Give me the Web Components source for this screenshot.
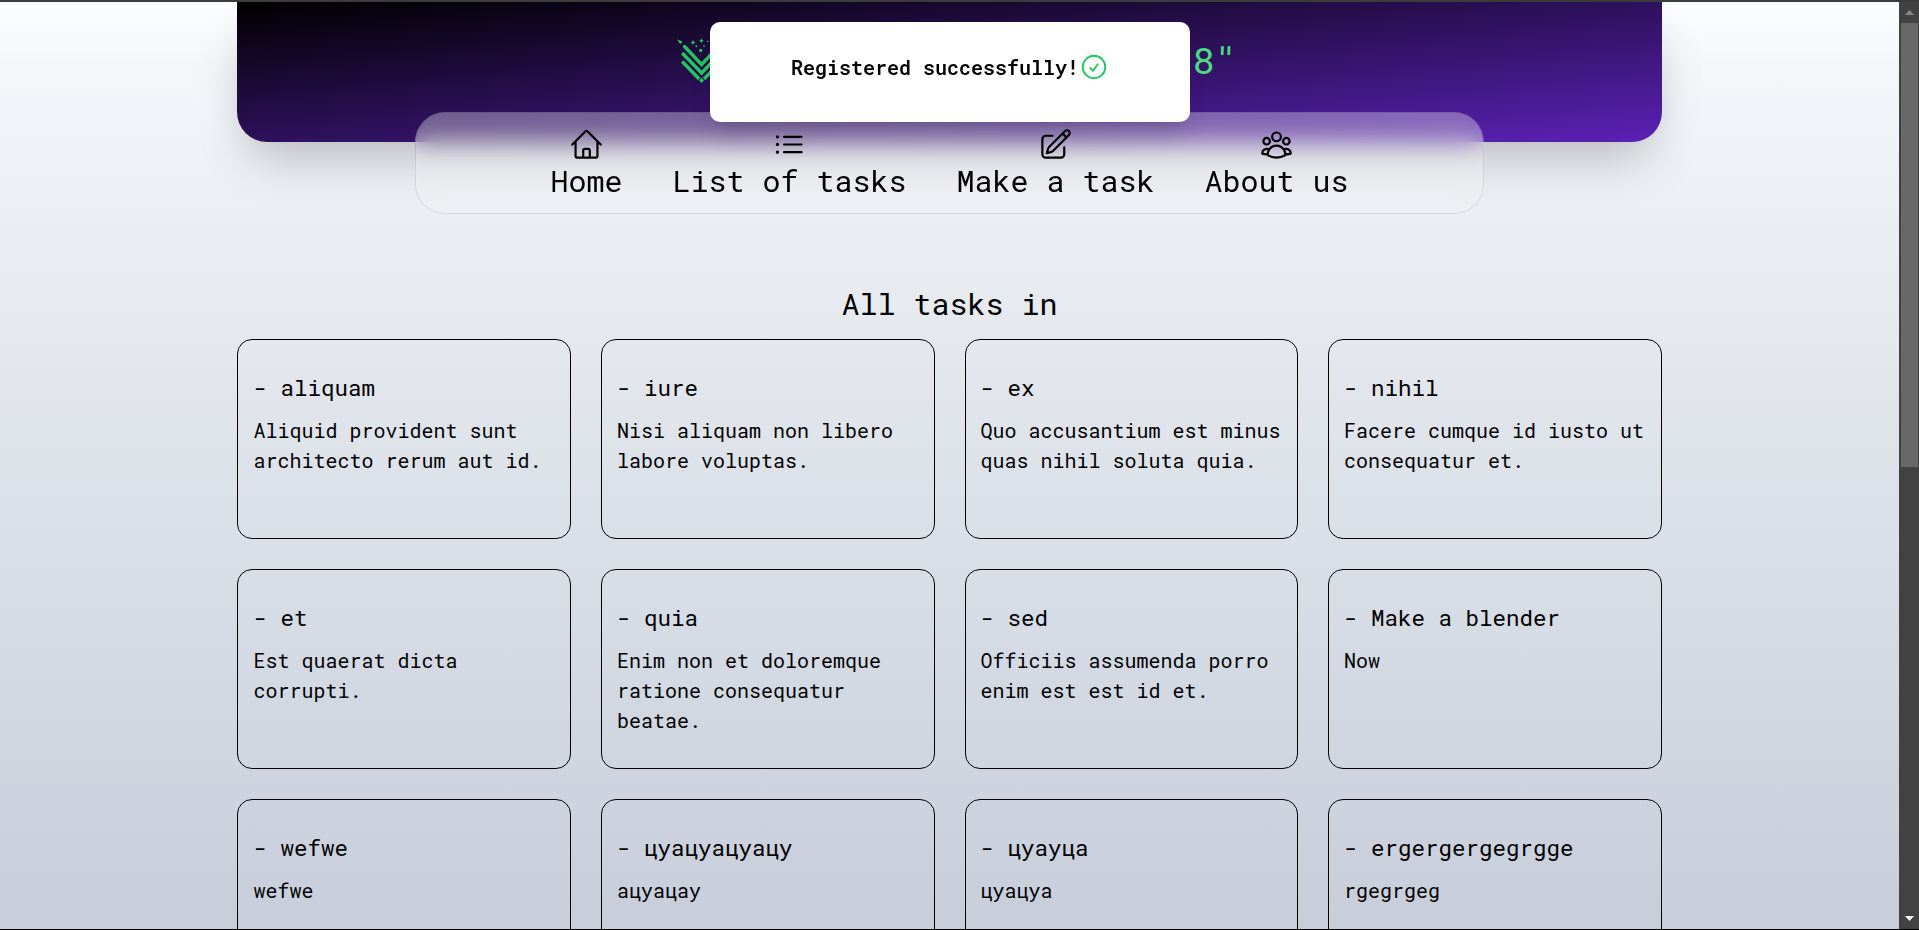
<!DOCTYPE html>
<html lang="en">
<head>
<meta charset="utf-8">
<title>Tasks</title>
<style>
html,body{margin:0;height:100%;overflow:hidden}
body{font-family:"Roboto Mono","Liberation Mono",monospace;color:#000}
</style>
</head>
<body>
<task-app></task-app>
<script>
const define=(name,html)=>customElements.define(name,class extends HTMLElement{
  constructor(){super();this.attachShadow({mode:'open'}).innerHTML=html;}
});

const icons={
  home:'M2.25 12l8.954-8.955c.44-.439 1.152-.439 1.591 0L21.75 12M4.5 9.75v10.125c0 .621.504 1.125 1.125 1.125H9.75v-4.875c0-.621.504-1.125 1.125-1.125h2.25c.621 0 1.125.504 1.125 1.125V21h4.125c.621 0 1.125-.504 1.125-1.125V9.75M8.25 21h8.25',
  list:'M8.25 6.75h12M8.25 12h12m-12 5.25h12M3.75 6.75h.007v.008H3.75V6.75zm.375 0a.375.375 0 11-.75 0 .375.375 0 01.75 0zM3.75 12h.007v.008H3.75V12zm.375 0a.375.375 0 11-.75 0 .375.375 0 01.75 0zm-.375 5.25h.007v.008H3.75v-.008zm.375 0a.375.375 0 11-.75 0 .375.375 0 01.75 0z',
  edit:'M16.862 4.487l1.687-1.688a1.875 1.875 0 112.652 2.652L10.582 16.07a4.5 4.5 0 01-1.897 1.13L6 18l.8-2.685a4.5 4.5 0 011.13-1.897l8.932-8.931zm0 0L19.5 7.125M18 14v4.75A2.25 2.25 0 0115.75 21H5.25A2.25 2.25 0 013 18.75V8.25A2.25 2.25 0 015.25 6H10',
  group:'M18 18.72a9.094 9.094 0 003.741-.479 3 3 0 00-4.682-2.72m.94 3.198l.001.031c0 .225-.012.447-.037.666A11.944 11.944 0 0112 21c-2.17 0-4.207-.576-5.963-1.584A6.062 6.062 0 016 18.719m12 0a5.971 5.971 0 00-.941-3.197m0 0A5.995 5.995 0 0012 12.75a5.995 5.995 0 00-5.058 2.772m0 0a3 3 0 00-4.681 2.72 8.986 8.986 0 003.74.477m.94-3.197a5.971 5.971 0 00-.94 3.197M15 6.75a3 3 0 11-6 0 3 3 0 016 0zm6 3a2.25 2.25 0 11-4.5 0 2.25 2.25 0 014.5 0zm-13.5 0a2.25 2.25 0 11-4.5 0 2.25 2.25 0 014.5 0z',
  check:'M9 12.75L11.25 15 15 9.75M21 12a9 9 0 11-18 0 9 9 0 0118 0z'
};
customElements.define('ui-icon',class extends HTMLElement{
  connectedCallback(){
    this.attachShadow({mode:'open'}).innerHTML=`<style>:host{display:block;width:var(--size,35px);height:var(--size,35px)}svg{display:block;width:100%;height:100%}</style>
    <svg viewBox="0 0 24 24" fill="none" stroke="currentColor" stroke-width="1.5" stroke-linecap="round" stroke-linejoin="round"><path d="${icons[this.getAttribute('name')]}"/></svg>`;
  }
});

define('brand-logo',`<style>:host{display:block;width:80px;height:80px;color:#22c55e}svg{display:block}</style>
<svg width="80" height="80" viewBox="0 0 80 80" fill="none" stroke="currentColor" stroke-width="3.4">
<path stroke-linecap="round" d="M22.500 24.500L39.600 42.500L56.700 24.500"/><path d="M20.200 31L39.600 51L59 31M20.200 39.500L37.200 57M59 39.500L42 57"/>
<g fill="currentColor" stroke="none"><path d="M15.300 17.500l4.200 1.500 1 .8-1.800 2.200-1.800-1.500z"/><path d="M39.600 55.800l2.400 2.600-2.400 2.600-2.400-2.600z"/>
<path d="M31 18.100l.9 1.600 1.700.8-1.700.8-.9 1.600-.9-1.600-1.700-.8 1.700-.8z"/><path d="M39.400 16.200l.8 1.700 1.700.8-1.700.8-.8 1.700-.8-1.700-1.700-.8 1.700-.8z"/><circle cx="38.700" cy="28.400" r="1.700"/><circle cx="34.400" cy="24.300" r="1"/><circle cx="42" cy="23.800" r=".9"/><circle cx="45.700" cy="19.200" r=".8"/></g></svg>`);

define('site-header',`<style>:host{display:flex;justify-content:center;box-sizing:border-box;height:140px;padding-top:20px;border-radius:0 0 30px 30px;background:linear-gradient(to bottom right,#000,#5b21b6);box-shadow:0 25px 50px -12px rgba(0,0,0,.25)}
.row{display:flex;justify-content:space-between;align-items:flex-start;width:575px;height:80px}
.t{font-size:37.5px;line-height:76px;color:#4ade80}</style>
<div class="row"><brand-logo></brand-logo><div class="t"><slot></slot></div></div>`);

define('nav-link',`<style>:host{display:flex;flex-direction:column;align-items:center;font-size:30px;line-height:38px;white-space:nowrap}</style><slot name="icon"></slot><span><slot></slot></span>`);

define('site-nav',`<style>:host{display:flex;justify-content:center;gap:50px;box-sizing:border-box;width:75%;height:102px;margin:-30px auto 0;padding-top:13.500px;border:1px solid rgba(0,0,0,.09);border-radius:30px;background:rgba(243,244,246,.35);-webkit-backdrop-filter:blur(12px);backdrop-filter:blur(12px);position:relative}</style><slot></slot>`);

define('task-card',`<style>:host{display:block;box-sizing:border-box;height:200px;padding:29px 15px 0;border:1px solid #000;border-radius:15px}
.h{font-size:22.5px;line-height:36px}.b{margin-top:10px;font-size:20px;line-height:30px}</style>
<div class="h"><slot name="title"></slot></div><div class="b"><slot></slot></div>`);

define('task-grid',`<style>:host{display:grid;grid-template-columns:repeat(4,minmax(0,1fr));gap:30px}</style><slot></slot>`);

define('toast-message',`<style>:host{position:absolute;left:710px;top:22px;width:480px;height:100px;box-sizing:border-box;display:flex;justify-content:center;padding-top:30px;background:#fff;border-radius:10px;font-size:20px;font-weight:600;line-height:30px;box-shadow:0 20px 25px -5px rgba(0,0,0,.1),0 8px 10px -6px rgba(0,0,0,.1);z-index:2;white-space:nowrap}
ui-icon{--size:30px;color:#22c55e}</style><span class="t"><slot></slot></span><ui-icon name="check"></ui-icon>`);

define('page-scrollbar',`<style>:host{display:flex;flex-direction:column;align-items:center;width:20px;background:#424242;flex:none}
.b{height:21px;width:20px;display:grid;place-items:center;flex:none}.thumb{width:17px;height:444px;background:#686868}.s{flex:1}svg{display:block}</style>
<div class="b"><svg width="9" height="5"><path d="M0 5L4.500 0L9 5z" fill="#868686"/></svg></div><div class="thumb"></div><div class="s"></div><div class="b"><svg width="9" height="5"><path d="M0 0L4.500 5L9 0z" fill="#fff"/></svg></div>`);

const tasks=[['aliquam','Aliquid provident sunt architecto rerum aut id.'],['iure','Nisi aliquam non libero labore voluptas.'],['ex','Quo accusantium est minus quas nihil soluta quia.'],['nihil','Facere cumque id iusto ut consequatur et.'],['et','Est quaerat dicta corrupti.'],['quia','Enim non et doloremque ratione consequatur beatae.'],['sed','Officiis assumenda porro enim est est id et.'],['Make a blender','Now'],['wefwe','wefwe'],['цуацуацуацу','ацуацау'],['цуауца','цуацуа'],['ergergergegrgge','rgegrgeg']];

define('task-app',`<style>:host{display:flex;box-sizing:border-box;height:930px;border-top:2px solid #3c3c3c;border-bottom:1px solid #000;overflow:hidden}
main{flex:1;min-width:0;overflow:hidden;background:linear-gradient(#fcfdfe 0,#f4f6fa 7%,#ecf0f4 21%,#e5e8ed 36%,#d8dfe7 60%,#c7ceda 100%)}
.wrap{width:75%;margin:0 auto}h1{margin:69px 0 15px;text-align:center;font-weight:400;font-size:30px;line-height:41px}</style>
<main><div class="wrap"><site-header>8"</site-header>
<site-nav><nav-link><ui-icon slot="icon" name="home"></ui-icon>Home</nav-link><nav-link><ui-icon slot="icon" name="list"></ui-icon>List of tasks</nav-link><nav-link><ui-icon slot="icon" name="edit"></ui-icon>Make a task</nav-link><nav-link><ui-icon slot="icon" name="group"></ui-icon>About us</nav-link></site-nav>
<h1>All tasks in</h1>
<task-grid>${tasks.map(t=>`<task-card><span slot="title">- ${t[0]}</span>${t[1]}</task-card>`).join('')}</task-grid></div></main>
<page-scrollbar></page-scrollbar><toast-message>Registered successfully!</toast-message>`);
</script>
</body>
</html>
